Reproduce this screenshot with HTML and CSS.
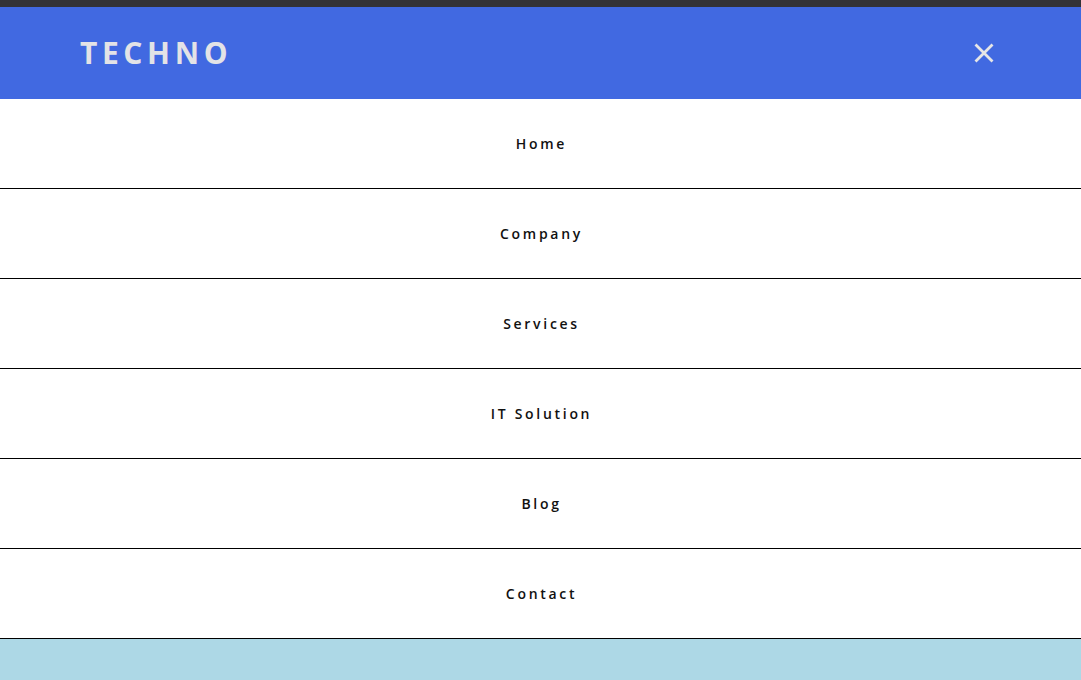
FILE: index.html
```html
<!DOCTYPE html>
<html>
<head>
<meta charset="utf-8">
<link rel="stylesheet" href="styles.css">
</head>
<body>
<div class="topbar"></div>
<header class="header">
  <div class="logo">TECHNO</div>
  <button class="close" aria-label="Close">
    <svg width="20" height="20" viewBox="0 0 20 20"><path d="M1.5 1.5 L18.5 18.5 M18.5 1.5 L1.5 18.5" stroke="#e6e6e6" stroke-width="2.8" stroke-linecap="butt" fill="none"/></svg>
  </button>
</header>
<nav class="menu">
  <a class="item" href="#">Home</a>
  <a class="item" href="#">Company</a>
  <a class="item" href="#">Services</a>
  <a class="item" href="#">IT Solution</a>
  <a class="item" href="#">Blog</a>
  <a class="item" href="#">Contact</a>
</nav>
<main class="content"></main>
</body>
</html>
```
FILE: styles.css
```css
html, body {
  margin: 0;
  padding: 0;
  height: 100%;
}
body {
  font-family: "Open Sans", "Liberation Sans", sans-serif;
  background: #add8e6;
  display: flex;
  flex-direction: column;
}
.topbar {
  height: 7px;
  background: #333336;
}
.header {
  height: 92px;
  background: #4169e1;
  display: flex;
  align-items: center;
  justify-content: space-between;
  padding: 0 87px 0 80px;
}
.logo {
  color: #e3e3e6;
  font-size: 30px;
  font-weight: 700;
  letter-spacing: 4.6px;
  margin-top: -2px;
}
.close {
  background: none;
  border: none;
  padding: 0;
  width: 20px;
  height: 20px;
  display: flex;
  margin-top: -1px;
}
.menu {
  display: flex;
  flex-direction: column;
  background: #fff;
}
.item {
  height: 89px;
  border-bottom: 1px solid #000;
  display: flex;
  align-items: center;
  justify-content: center;
  color: #111;
  text-decoration: none;
  font-size: 14px;
  font-weight: 600;
  letter-spacing: 2.7px;
  padding-left: 2px;
}
.content {
  flex: 1;
  background: #add8e6;
}
```
